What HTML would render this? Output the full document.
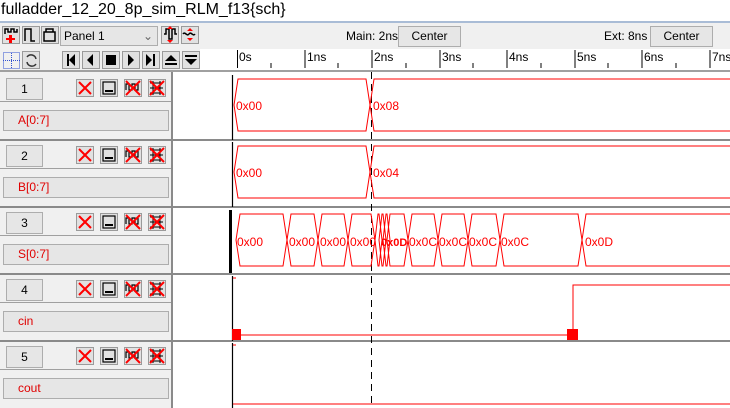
<!DOCTYPE html>
<html><head><meta charset="utf-8"><style>
body{margin:0;width:730px;height:408px;overflow:hidden;background:#f0f0f0;font-family:"Liberation Sans",sans-serif;position:relative}
.a{position:absolute}
.btn{position:absolute;background:#e6e6e6;border:1px solid #adadad;box-sizing:border-box;font-size:12px;color:#000;text-align:center}
.ib{position:absolute;width:18px;height:18px;background:#e1e1e1;border:1px solid #9a9a9a;box-sizing:border-box}
</style></head><body>
<div class="a" style="left:0;top:0;width:730px;height:21px;background:#fff;border-bottom:2px solid #a9bcd6"></div>
<div class="a" style="left:1px;top:0;font-size:16px;line-height:20px;color:#000">fulladder_12_20_8p_sim_RLM_f13{sch}</div>
<div class="ib" style="left:2px;top:26px"></div>
<div class="ib" style="left:22px;top:26px"></div>
<div class="ib" style="left:41px;top:26px"></div>
<div class="btn" style="left:60px;top:26px;width:98px;height:20px;text-align:left;padding-left:3px;line-height:18px;font-size:12px">Panel 1<span style="position:absolute;right:4px;color:#666">⌄</span></div>
<div class="ib" style="left:161px;top:26px"></div>
<div class="ib" style="left:181px;top:26px"></div>
<div class="ib" style="left:22px;top:51px"></div>
<div class="ib" style="left:62px;top:51px"></div><div class="ib" style="left:82px;top:51px"></div><div class="ib" style="left:102px;top:51px"></div><div class="ib" style="left:122px;top:51px"></div><div class="ib" style="left:142px;top:51px"></div><div class="ib" style="left:162px;top:51px"></div><div class="ib" style="left:182px;top:51px"></div>
<svg class="a" style="left:0;top:24px" width="200" height="48">
<g fill="none" stroke="#000" stroke-width="1.5">
<path d="M5 10V5h3v3h3V5h3v3h3V5"/><path d="M25 17V5h6v12h4"/><rect x="44" y="8" width="11" height="9"/><path d="M46 8V5h7v3"/>
<path d="M164 10h2V5h3v10h3V5h3v5h2"/><path d="M183 10c2-3 4 3 6 0s4 3 6 0"/>
</g>
<g fill="red"><path d="M9 11h3v3h3v2h-3v3h-3v-3H6v-2h3z"/><path d="M170 2l3 3h-6zM170 19l3-3h-6z"/><path d="M190 4l3 3h-6zM190 17l3-3h-6z"/></g>
<rect x="3.5" y="28.5" width="16" height="16" fill="none" stroke="#3050d0" stroke-width="1" stroke-dasharray="1 1"/>
<path d="M11.5 29v16M3 36.5h17" stroke="#3050d0" stroke-dasharray="1 1"/>
<path d="M27 33a5 5 0 0 1 9 2M36 40a5 5 0 0 1-9-2" fill="none" stroke="#333" stroke-width="1.5"/>
</svg>
<svg class="a" style="left:0;top:0" width="200" height="72"><g fill="#000">
<rect x="67" y="54" width="2" height="12"/><path d="M75 54v12l-6-6z"/>
<path d="M93 54v12l-6-6z"/><rect x="106" y="55" width="10" height="10"/>
<path d="M128 54v12l6-6z"/><path d="M146 54v12l6-6z"/><rect x="153" y="54" width="2" height="12"/>
<path d="M165 61h12l-6-6z"/><rect x="165" y="63" width="12" height="2"/>
<rect x="185" y="55" width="12" height="2"/><path d="M185 59h12l-6 6z"/></g></svg>
<div class="a" style="left:200px;top:49px;width:530px;height:21px;background:#fff"></div>
<div class="a" style="left:0;top:70px;width:730px;height:2px;background:#a0a0a0"></div>
<div class="a" style="left:346px;top:29px;font-size:12px">Main: 2ns</div>
<div class="btn" style="left:398px;top:26px;width:63px;height:21px;line-height:19px">Center</div>
<div class="a" style="left:604px;top:29px;font-size:12px">Ext: 8ns</div>
<div class="btn" style="left:650px;top:26px;width:63px;height:21px;line-height:19px">Center</div>
<svg class="a" style="left:0;top:0" width="730" height="408" font-family="Liberation Sans" font-size="12">
<g stroke="#000" stroke-width="1">
<path d="M237.5 50v18M305 50v18M372 50v18M440 50v18M507 50v18M575 50v18M642 50v18M710 50v18"/>
<path d="M271 63v5M338 63v5M406 63v5M473 63v5M541 63v5M608 63v5M676 63v5"/>
</g>
<g fill="#000"><text x="239" y="61">0s</text><text x="307" y="61">1ns</text><text x="374" y="61">2ns</text><text x="442" y="61">3ns</text><text x="509" y="61">4ns</text><text x="577" y="61">5ns</text><text x="644" y="61">6ns</text><text x="712" y="61">7ns</text></g>
</svg>
<div class="a" style="left:0;top:72px;width:171px;height:336px;background:#f0f0f0;border-right:2px solid #8a8a8a"></div>
<div class="a" style="left:173px;top:72px;width:557px;height:336px;background:#fff"></div>
<div id="rows"></div>
<svg class="a" style="left:0;top:0" width="730" height="408" font-family="Liberation Sans" font-size="12">
<g stroke="#8a8a8a" stroke-width="2"><path d="M0 140H730M0 207H730M0 274H730M0 341H730"/></g>
<g stroke="#000" stroke-width="1.2"><path d="M232.5 75v65M232.5 142v65M232.5 276v65M232.5 343v65"/></g>
<rect x="229" y="210" width="3" height="63" fill="#000"/>
<path d="M371.5 72V408" stroke="#000" stroke-dasharray="7 5"/>
<g fill="none" stroke="red" stroke-width="1">
<path d="M234 105L238 79H366L370 105L366 131H238Z"/><path d="M740 79H374L370 105L374 131H740"/>
<path d="M234 172L238 146H366L370 172L366 198H238Z"/><path d="M740 146H374L370 172L374 198H740"/>
<path d="M236 240L240 214H283L287 240L283 266H240Z"/><path d="M287 240L291 214H314L318 240L314 266H291Z"/><path d="M318 240L322 214H344L348 240L344 266H322Z"/><path d="M348 240L352 214H371L375 240L371 266H352Z"/>
<path d="M375 240L378 214H379L382 240L379 266H378Z"/><path d="M379 240L382 214H383L386 240L383 266H382Z"/><path d="M383 240L386 214H387L390 240L387 266H386Z"/><path d="M387 240L390 214H404L408 240L404 266H390Z"/>
<path d="M408 240L412 214H434L438 240L434 266H412Z"/><path d="M438 240L442 214H464L468 240L464 266H442Z"/><path d="M468 240L472 214H496L500 240L496 266H472Z"/><path d="M500 240L504 214H578L582 240L578 266H504Z"/><path d="M740 214H586L582 240L586 266H740"/>
<path d="M233 335H573V285H740"/><path d="M233 278h3"/><path d="M233 404H740"/><path d="M233 345h3"/>
</g>
<rect x="232" y="329" width="9" height="11" fill="red"/><rect x="567" y="329" width="11" height="11" fill="red"/>
<g fill="red"><text x="236" y="110">0x00</text><text x="373" y="110">0x08</text><text x="236" y="177">0x00</text><text x="373" y="177">0x04</text>
<text x="237" y="246">0x00</text><text x="289" y="246">0x00</text><text x="320" y="246">0x00</text><text x="350" y="246">0x00</text><text x="381" y="246" font-weight="bold" font-size="11">0x0D</text><text x="409" y="246">0x0C</text><text x="439" y="246">0x0C</text><text x="469" y="246">0x0C</text><text x="501" y="246">0x0C</text><text x="585" y="246">0x0D</text></g>
</svg>
<script>
var tops=[73,140,207,274,341],names=["A[0:7]","B[0:7]","S[0:7]","cin","cout"],h="";
for(var i=0;i<5;i++){var t=tops[i];
h+='<div class="btn" style="left:6px;top:'+(t+5)+'px;width:37px;height:22px;line-height:20px">'+(i+1)+'</div>';
h+='<div class="a" style="left:0;top:'+(t+28)+'px;width:171px;height:1px;background:#a0a0a0"></div>';
h+='<div class="btn" style="left:3px;top:'+(t+37)+'px;width:166px;height:21px;line-height:19px;text-align:left;padding-left:14px;color:#e00000">'+names[i]+'</div>';
var ic=[76,100,124,148];
for(var j=0;j<4;j++){h+='<div class="ib" style="left:'+ic[j]+'px;top:'+(t+6)+'px"></div>';}
h+='<svg class="a" style="left:0;top:'+t+'px" width="171" height="30"><g fill="none" stroke-width="2">'+
'<path d="M79 9l12 12M91 9l-12 12" stroke="red"/>'+
'<rect x="103" y="9" width="12" height="12" stroke="#000" stroke-width="1.2"/><path d="M105 18h8" stroke="#000" stroke-width="2"/>'+
'<path d="M126 17V11h3v6h3v-6h3v6h3v-6" stroke="#000" stroke-width="1.2"/><path d="M126 8l14 14M140 8l-14 14" stroke="red"/>'+
'<path d="M150 10h13M150 15h13M150 20h13M153 8v14M160 8v14" stroke="#000" stroke-width="1"/><path d="M150 8l14 14M164 8l-14 14" stroke="red"/>'+
'</g></svg>';}
document.getElementById("rows").outerHTML=h;
</script>
</body></html>
